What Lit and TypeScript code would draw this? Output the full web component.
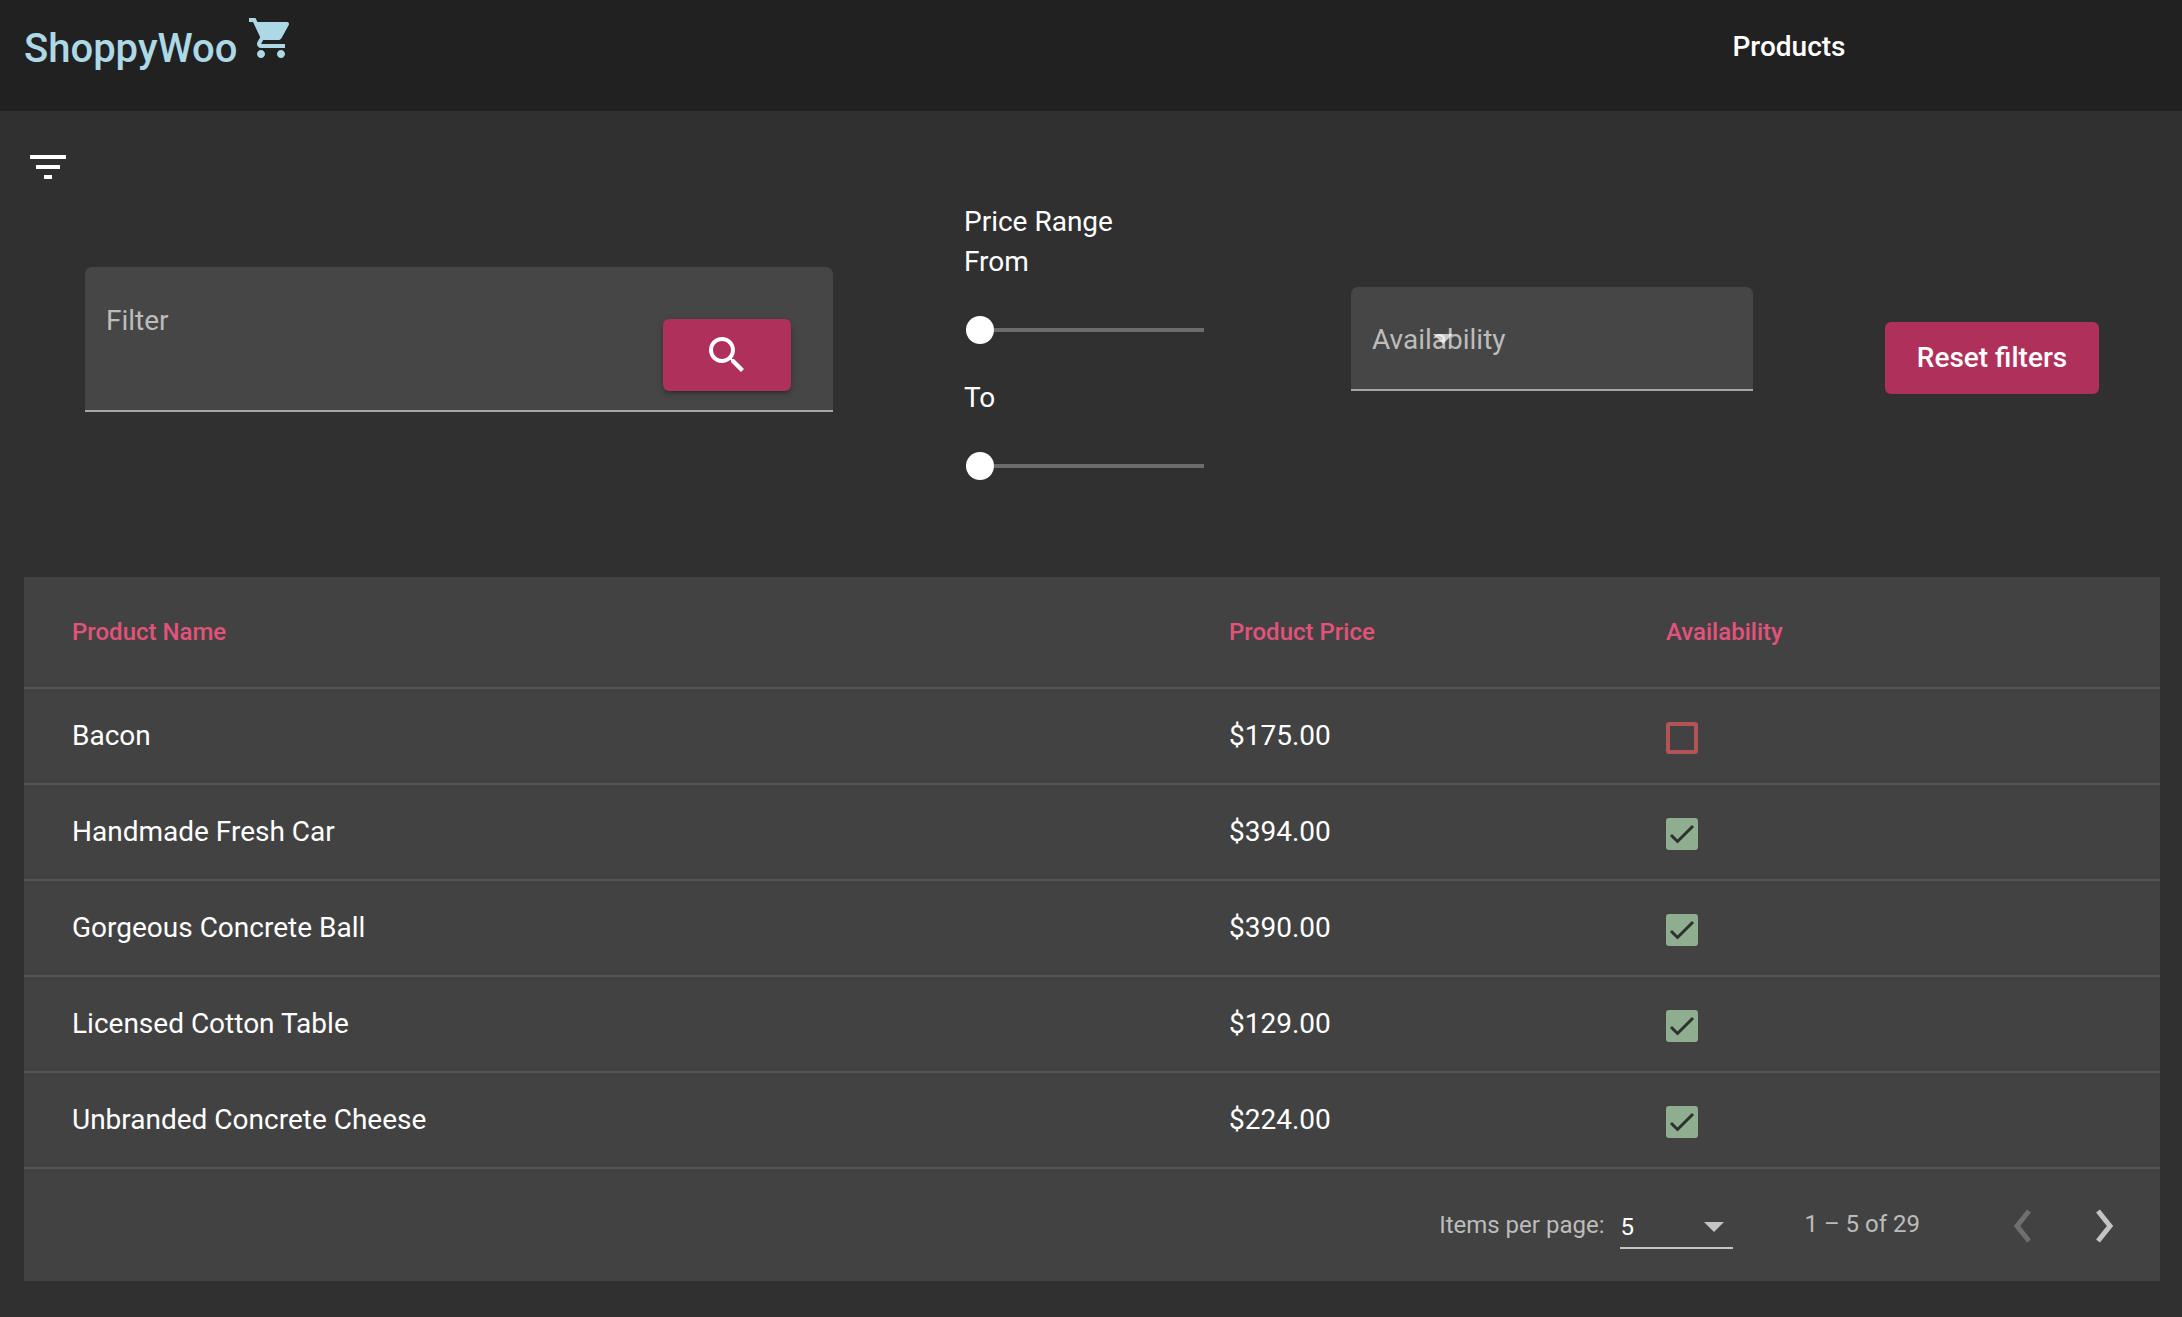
import { LitElement, html, css } from 'lit';
import { customElement } from 'lit/decorators.js';

interface Product
{
  name: string;
  price: string;
  available: boolean;
}

const PRODUCTS: Product[] = [
  { name: 'Bacon', price: '$175.00', available: false },
  { name: 'Handmade Fresh Car', price: '$394.00', available: true },
  { name: 'Gorgeous Concrete Ball', price: '$390.00', available: true },
  { name: 'Licensed Cotton Table', price: '$129.00', available: true },
  { name: 'Unbranded Concrete Cheese', price: '$224.00', available: true },
];

@customElement('app-root')
export class AppRoot extends LitElement
{
  static styles = css`
    :host {
      display: block;
      height: 1317px;
      overflow: hidden;
      background: #303030;
      color: #fff;
      font-family: Roboto, "Liberation Sans", sans-serif;
      font-size: 28px;
    }
    svg { display: block; fill: currentColor; }
    .toolbar {
      height: 111px;
      background: #212121;
      display: flex;
      padding-left: 24px;
      box-sizing: border-box;
    }
    .logo {
      color: #add8e6;
      font-size: 40px;
      font-weight: 500;
      line-height: 48px;
      margin-top: 25px;
    }
    .cart { color: #add8e6; margin: 14px 0 0 10px; }
    .nav {
      font-size: 28px;
      font-weight: 500;
      line-height: 40px;
      margin: 27px 0 0 1437px;
    }
    main { padding: 32px 22px 0 24px; }
    .toggle { width: 48px; height: 48px; }
    .filters {
      display: flex;
      align-items: center;
      height: 296px;
      margin-bottom: 90px;
    }
    .field {
      background: #464646;
      border-bottom: 2px solid #a6a6a6;
      border-radius: 7px 7px 0 0;
      color: #bcbcbc;
      position: relative;
      box-sizing: border-box;
    }
    .filter-field {
      width: 748px;
      height: 145px;
      margin-left: 61px;
      padding: 37px 21px;
    }
    .search {
      position: absolute;
      left: 578px;
      top: 52px;
      width: 128px;
      height: 72px;
      border-radius: 6px;
      background: #b0305c;
      color: #fff;
      display: flex;
      align-items: center;
      justify-content: center;
      box-shadow: 0 3px 3px -2px rgba(0,0,0,.2), 0 3px 4px rgba(0,0,0,.14), 0 1px 8px rgba(0,0,0,.12);
    }
    .price {
      width: 240px;
      margin: 37px 0 0 131px;
      line-height: 40px;
    }
    .slider {
      height: 28px;
      margin: 34px 0;
      display: flex;
      align-items: center;
      padding-left: 2px;
    }
    .thumb { width: 28px; height: 28px; border-radius: 50%; background: #fff; flex: none; }
    .track { height: 4px; flex: 1; background: #6b6b6b; }
    .avail-field {
      width: 402px;
      height: 104px;
      margin-left: 147px;
      padding: 36px 21px;
    }
    .avail-field .caret {
      position: absolute;
      left: 82px;
      top: 47px;
      width: 0;
      height: 0;
      border-left: 10px solid transparent;
      border-right: 10px solid transparent;
      border-top: 10px solid rgba(255,255,255,.7);
    }
    .reset {
      width: 214px;
      height: 72px;
      padding-bottom: 2px;
      box-sizing: border-box;
      margin: 38px 0 0 132px;
      border-radius: 6px;
      background: #b0305c;
      color: #fff;
      font-weight: 500;
      display: flex;
      align-items: center;
      justify-content: center;
    }
    .panel { background: #424242; }
    table { width: 100%; border-collapse: collapse; table-layout: fixed; }
    th {
      height: 111px;
      padding: 0 0 0 48px;
      box-sizing: border-box;
      text-align: left;
      color: #e2527a;
      font-size: 24px;
      font-weight: 500;
      border-bottom: 2px solid #555;
    }
    td {
      height: 96px;
      padding: 0 0 2px 48px;
      box-sizing: border-box;
      border-bottom: 2px solid #555;
    }
    .c1 { width: 1157px; }
    .c2 { width: 437px; }
    .check { width: 32px; height: 32px; box-sizing: border-box; border-radius: 3px; margin-top: 6px; }
    .check.off { border: 4px solid #b25355; }
    .check.on { background: #8fad8f; color: #303030; }
    .pager {
      height: 112px;
      display: flex;
      align-items: center;
      font-size: 24px;
      color: #bcbcbc;
    }
    .per-page { margin-left: auto; }
    .select {
      width: 113px;
      height: 44px;
      margin: 0 0 0 16px;
      border-bottom: 2px solid #c4c4c4;
      box-sizing: border-box;
      color: #fff;
      line-height: 44px;
      position: relative;
      top: 2px;
    }
    .select i {
      position: absolute;
      left: 84px;
      top: 17px;
      width: 0;
      height: 0;
      border-left: 10px solid transparent;
      border-right: 10px solid transparent;
      border-top: 10px solid #c4c4c4;
    }
    .range { margin-left: 71px; position: relative; top: -1px; }
    .nav-btn { width: 24px; height: 36px; margin: 2px 0 0 57px; color: #c4c4c4; }
    .nav-btn.first { margin-left: 91px; color: #6f6f6f; }
    .nav-btn.last { margin-right: 44px; }
  `;

  private cell(item: Product)
  {
    if (item.available === false) { return html`<div class="check off"></div>`; }
    return html`
      <div class="check on">
        <svg width="32" height="32" viewBox="0 0 32 32"><path d="M5 17l6.500 6.500L27 8" fill="none" stroke="currentColor" stroke-width="3"/></svg>
      </div>
    `;
  }

  render()
  {
    return html`
      <header class="toolbar">
        <div class="logo">ShoppyWoo</div>
        <svg class="cart" width="48" height="48" viewBox="0 0 24 24"><path d="M7 18c-1.100 0-1.990.9-1.990 2S5.900 22 7 22s2-.9 2-2-.9-2-2-2zM1 2v2h2l3.600 7.590-1.350 2.450c-.16.280-.25.610-.25.960 0 1.100.9 2 2 2h12v-2H7.420c-.14 0-.25-.11-.25-.25l.03-.12.9-1.630h7.450c.75 0 1.410-.41 1.750-1.030l3.580-6.470c.08-.14.12-.31.12-.48 0-.55-.45-1-1-1H5.210l-.94-2H1zm16 16c-1.100 0-1.990.9-1.990 2s.89 2 1.990 2 2-.9 2-2-.9-2-2-2z"/></svg>
        <div class="nav">Products</div>
      </header>
      <main>
        <div class="toggle">
          <svg width="48" height="48" viewBox="0 0 24 24"><path d="M10 18h4v-2h-4v2zM3 6v2h18V6H3zm3 7h12v-2H6v2z"/></svg>
        </div>
        <section class="filters">
          <div class="field filter-field">
            Filter
            <div class="search">
              <svg width="48" height="48" viewBox="0 0 24 24"><path d="M15.500 14h-.79l-.28-.27C15.410 12.590 16 11.110 16 9.500 16 5.910 13.090 3 9.500 3S3 5.910 3 9.500 5.910 16 9.500 16c1.610 0 3.090-.59 4.230-1.570l.27.280v.79l5 4.990L20.490 19l-4.990-5zm-6 0C7.010 14 5 11.990 5 9.500S7.010 5 9.500 5 14 7.010 14 9.500 11.990 14 9.500 14z"/></svg>
            </div>
          </div>
          <div class="price">
            <div>Price Range</div>
            <div>From</div>
            <div class="slider"><div class="thumb"></div><div class="track"></div></div>
            <div>To</div>
            <div class="slider"><div class="thumb"></div><div class="track"></div></div>
          </div>
          <div class="field avail-field">Availability<span class="caret"></span></div>
          <div class="reset">Reset filters</div>
        </section>
        <section class="panel">
          <table>
            <thead>
              <tr><th class="c1">Product Name</th><th class="c2">Product Price</th><th>Availability</th></tr>
            </thead>
            <tbody>
              ${PRODUCTS.map((item) => html`
                <tr><td>${item.name}</td><td>${item.price}</td><td>${this.cell(item)}</td></tr>
              `)}
            </tbody>
          </table>
          <div class="pager">
            <span class="per-page">Items per page:</span>
            <div class="select">5<i></i></div>
            <span class="range">1 – 5 of 29</span>
            <svg class="nav-btn first" viewBox="0 0 24 36"><path d="M18 3L6 18l12 15" fill="none" stroke="currentColor" stroke-width="5"/></svg>
            <svg class="nav-btn last" viewBox="0 0 24 36"><path d="M6 3l12 15L6 33" fill="none" stroke="currentColor" stroke-width="5"/></svg>
          </div>
        </section>
      </main>
    `;
  }
}
